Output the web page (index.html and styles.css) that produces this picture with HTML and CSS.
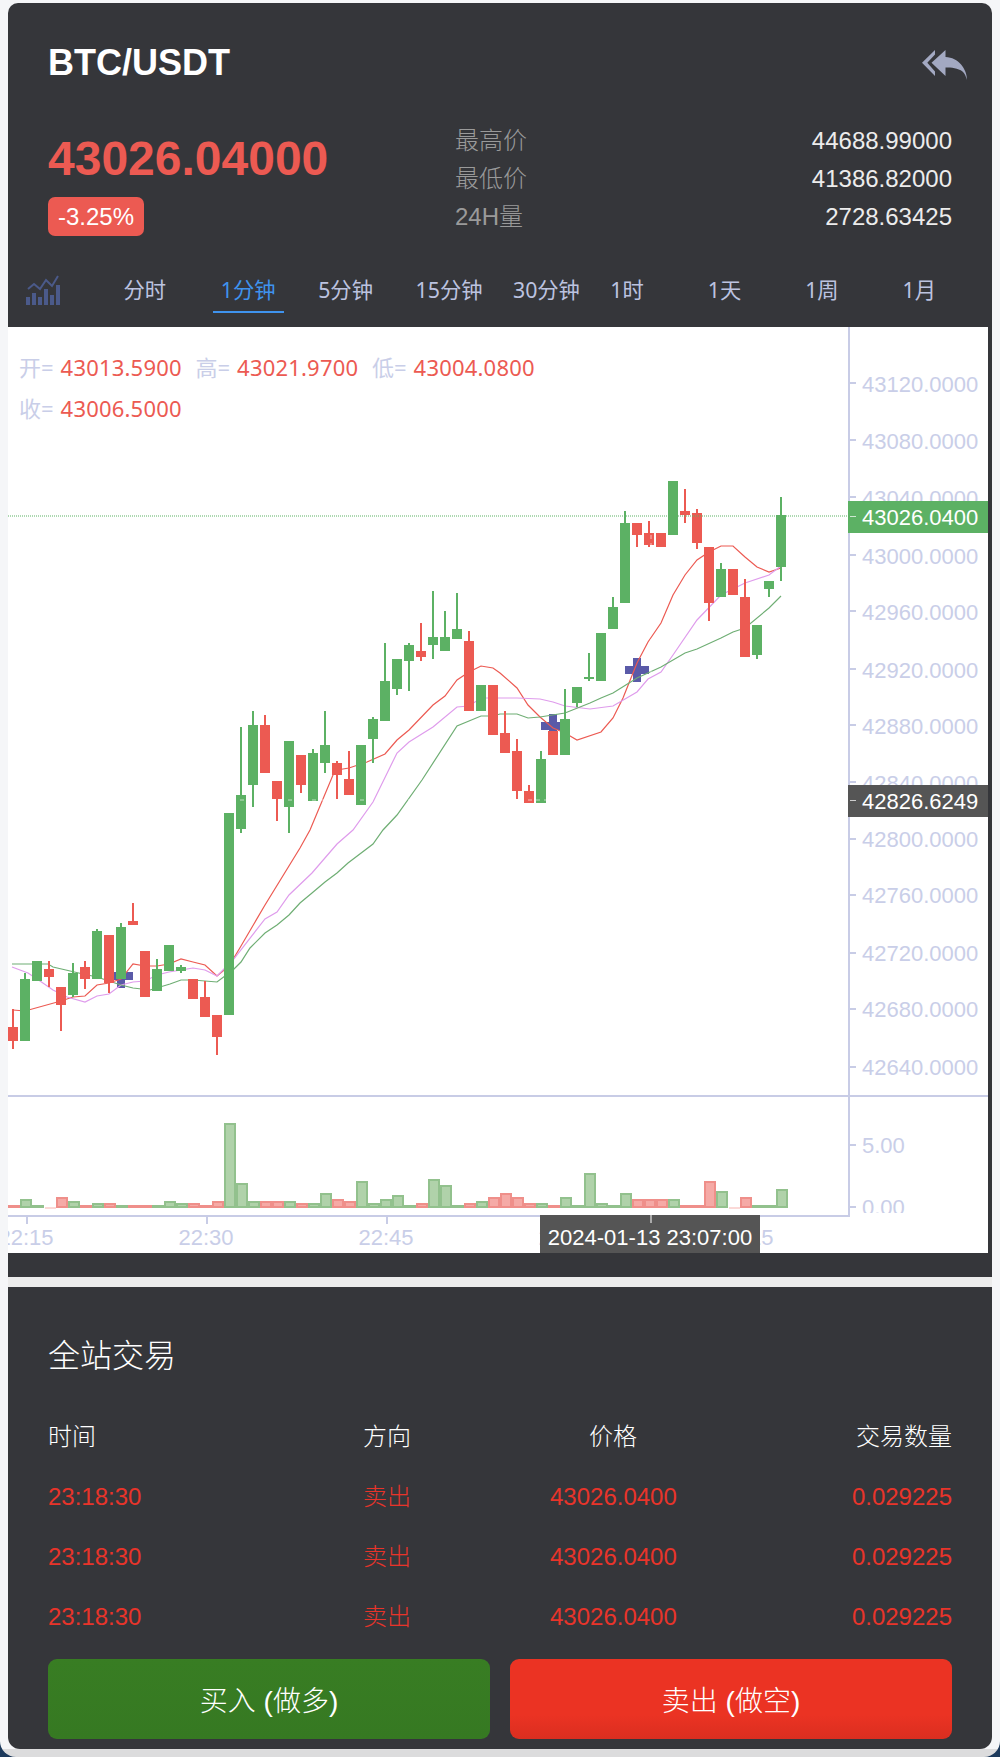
FILE: index.html
```html
<!DOCTYPE html>
<html lang="zh">
<head>
<meta charset="utf-8">
<title>BTC/USDT</title>
<link rel="stylesheet" href="styles.css">
</head>
<body>
<div class="page">
  <section class="card market">
    <header class="title-row">
      <h1 class="pair">BTC/USDT</h1>
      <svg class="back" viewBox="0 0 45 30" aria-hidden="true">
        <path d="M13 0 0 12.7 13 26v-4.400L5.300 12.700 13 4.500z"/>
        <path d="M23.500 0 9.500 12.700 23.500 26v-8.500c6 0 12.500.5 17 4 2 1.800 3.500 5 4.500 8.500 0-11-8.500-22.500-21.500-23z"/>
      </svg>
    </header>
    <div class="summary">
      <div class="quote">
        <div class="price">43026.04000</div>
        <div class="change">-3.25%</div>
      </div>
      <dl class="stats">
        <div class="stat"><dt>最高价</dt><dd>44688.99000</dd></div>
        <div class="stat"><dt>最低价</dt><dd>41386.82000</dd></div>
        <div class="stat"><dt>24H量</dt><dd>2728.63425</dd></div>
      </dl>
    </div>
    <nav class="tabs">
      <span class="tab-icon">
        <svg width="34" height="30" viewBox="26 275 34 30" aria-hidden="true">
          <path class="icon-bars" d="M26 297h4v8h-4zM32 293h4v12h-4zM38 297h4v8h-4zM44 289h4v16h-4zM50 295h4v10h-4zM56 285h4v20h-4z"/>
          <polyline class="icon-line" points="28,289 34,284 40,289 46,280 52,286 58,276"/>
        </svg>
      </span>
      <span class="tab"><span class="tab-text">分时</span></span>
      <span class="tab"><span class="tab-text active">1分钟</span></span>
      <span class="tab"><span class="tab-text">5分钟</span></span>
      <span class="tab"><span class="tab-text">15分钟</span></span>
      <span class="tab"><span class="tab-text">30分钟</span></span>
      <span class="tab"><span class="tab-text">1时</span></span>
      <span class="tab"><span class="tab-text">1天</span></span>
      <span class="tab"><span class="tab-text">1周</span></span>
      <span class="tab"><span class="tab-text">1月</span></span>
    </nav>
    <div class="chart">
      <div class="legend">
        <span class="legend-item"><b>开=</b><i>43013.5900</i></span>
        <span class="legend-item"><b>高=</b><i>43021.9700</i></span>
        <span class="legend-item"><b>低=</b><i>43004.0800</i></span>
        <span class="legend-item"><b>收=</b><i>43006.5000</i></span>
      </div>
      <svg class="plot" width="980" height="926" viewBox="8 327 980 926">
        <defs>
          <clipPath id="vol-clip"><rect x="850" y="1097" width="138" height="116"/></clipPath>
        </defs>
        <path class="cross" d="M541 722h8v-8h8v8h8v8h-8v8h-8v-8h-8zM109 972h8v-8h8v8h8v8h-8v8h-8v-8h-8zM625 666h8v-8h8v8h8v8h-8v8h-8v-8h-8z"/>
        <polyline class="ma ma-red" points="13,1010 25,1011 61,1001 73,997 85,996 97,985 109,983 121,979 133,964 145,966 157,966 169,964 181,959 193,962 205,965 217,976 229,966 241,946 265,905 300,848 310,830 333,775 337,770 349,768 367,762 385,754 397,740 409,730 433,705 445,696 457,680 469,672 481,666 493,668 500,673 517,688 528,705 540,717 553,728 565,733 577,740 601,732 613,718 623,698 637,663 648,642 661,623 673,595 685,575 697,560 709,552 721,546 733,546 745,557 757,567 769,572 781,568"/>
        <polyline class="ma ma-pink" points="12,967 28,973 40,981 53,990 67,997 85,1002 97,996 109,994 121,985 133,982 145,981 157,975 169,972 181,970 193,968 205,970 217,976 233,960 265,919 277,912 289,895 312,873 337,844 353,830 373,802 397,753 409,742 433,727 457,707 469,706 481,698 500,698 517,698 540,699 553,702 565,706 590,709 613,706 637,692 648,679 661,672 673,655 697,620 721,595 745,583 769,575 781,566"/>
        <polyline class="ma ma-green" points="12,964 48,964 53,967 83,974 97,977 121,985 133,988 150,990 170,984 181,980 193,980 217,982 233,970 241,962 250,948 265,933 277,925 289,915 300,903 312,893 325,882 337,873 348,863 373,844 383,830 397,815 422,780 457,726 469,721 481,716 493,716 500,714 517,714 528,718 540,717 565,713 590,703 601,698 613,693 637,678 661,667 685,653 697,649 721,638 733,632 745,628 769,608 781,596"/>
        <path class="candle-up" d="M20 979h10v62h-10zM24 973h2v6h-2zM32 961h10v20h-10zM68 973h10v22h-10zM72 963h2v34h-2zM92 931h10v48h-10zM96 929h2v2h-2zM116 927h10v52h-10zM120 923h2v4h-2zM152 969h10v22h-10zM156 959h2v10h-2zM164 945h10v26h-10zM176 967h10v4h-10zM180 965h2v8h-2zM224 813h10v202h-10zM236 795h10v34h-10zM240 727h2v106h-2zM248 725h10v60h-10zM252 711h2v96h-2zM284 741h10v66h-10zM288 741h2v92h-2zM308 753h10v48h-10zM312 749h2v4h-2zM320 745h10v18h-10zM324 711h2v62h-2zM356 745h10v60h-10zM368 719h10v20h-10zM372 717h2v46h-2zM380 681h10v40h-10zM384 643h2v38h-2zM392 659h10v30h-10zM396 659h2v36h-2zM404 645h10v16h-10zM408 643h2v48h-2zM428 637h10v8h-10zM432 591h2v68h-2zM440 637h10v14h-10zM444 611h2v26h-2zM452 629h10v10h-10zM456 593h2v36h-2zM476 685h10v26h-10zM536 759h10v44h-10zM540 751h2v8h-2zM560 719h10v36h-10zM564 689h2v30h-2zM572 687h10v16h-10zM576 703h2v4h-2zM584 677h10v2h-10zM588 653h2v28h-2zM596 633h10v48h-10zM608 607h10v22h-10zM612 597h2v10h-2zM620 523h10v80h-10zM624 511h2v12h-2zM668 481h10v54h-10zM716 569h10v28h-10zM720 563h2v6h-2zM752 625h10v30h-10zM756 655h2v4h-2zM764 581h10v8h-10zM768 589h2v8h-2zM776 515h10v52h-10zM780 497h2v84h-2z"/>
        <path class="candle-down" d="M8 1027h10v14h-10zM12 1009h2v40h-2zM44 969h10v8h-10zM48 961h2v26h-2zM56 987h10v18h-10zM60 1005h2v26h-2zM80 967h10v12h-10zM84 961h2v28h-2zM104 935h10v48h-10zM108 983h2v10h-2zM128 921h10v4h-10zM132 903h2v18h-2zM140 951h10v46h-10zM188 979h10v20h-10zM200 997h10v20h-10zM204 981h2v16h-2zM212 1015h10v22h-10zM216 1037h2v18h-2zM260 725h10v48h-10zM264 715h2v10h-2zM272 781h10v18h-10zM276 799h2v22h-2zM296 755h10v30h-10zM300 785h2v8h-2zM332 763h10v12h-10zM336 761h2v38h-2zM344 779h10v16h-10zM348 751h2v28h-2zM416 651h10v6h-10zM420 623h2v38h-2zM464 641h10v70h-10zM468 631h2v10h-2zM488 685h10v50h-10zM500 733h10v20h-10zM504 711h2v22h-2zM512 751h10v40h-10zM516 739h2v60h-2zM524 791h10v12h-10zM528 785h2v6h-2zM548 731h10v24h-10zM632 523h10v12h-10zM636 535h2v12h-2zM644 533h10v12h-10zM648 521h2v26h-2zM656 533h10v14h-10zM680 511h10v4h-10zM684 489h2v34h-2zM692 513h10v30h-10zM696 509h2v40h-2zM704 547h10v56h-10zM708 603h2v18h-2zM728 569h10v26h-10zM740 597h10v60h-10zM744 579h2v18h-2z"/>
        <line class="last-price" x1="8" y1="516" x2="848" y2="516"/>
        <path class="hair" d="M8 800H848M651 327V1215"/>
        <path class="vol-up" d="M21 1200h10v7h-10zM33 1206h10v1h-10zM69 1202h10v5h-10zM93 1204h10v3h-10zM117 1206h10v1h-10zM153 1206h10v1h-10zM165 1202h10v5h-10zM177 1204h10v3h-10zM225 1124h10v83h-10zM237 1184h10v23h-10zM249 1202h10v5h-10zM285 1202h10v5h-10zM309 1204h10v3h-10zM321 1194h10v13h-10zM357 1182h10v25h-10zM369 1204h10v3h-10zM381 1200h10v7h-10zM393 1196h10v11h-10zM405 1206h10v1h-10zM429 1180h10v27h-10zM441 1186h10v21h-10zM453 1206h10v1h-10zM477 1202h10v5h-10zM537 1204h10v3h-10zM561 1198h10v9h-10zM573 1206h10v1h-10zM585 1174h10v33h-10zM597 1204h10v3h-10zM609 1206h10v1h-10zM621 1194h10v13h-10zM669 1200h10v7h-10zM717 1192h10v15h-10zM753 1206h10v1h-10zM765 1206h10v1h-10zM777 1190h10v17h-10z"/>
        <path class="vol-down" d="M9 1206h10v1h-10zM57 1198h10v9h-10zM81 1206h10v1h-10zM105 1204h10v3h-10zM129 1206h10v1h-10zM141 1206h10v1h-10zM189 1204h10v3h-10zM201 1206h10v1h-10zM213 1202h10v5h-10zM261 1202h10v5h-10zM273 1202h10v5h-10zM297 1204h10v3h-10zM333 1200h10v7h-10zM345 1202h10v5h-10zM417 1204h10v3h-10zM465 1204h10v3h-10zM489 1198h10v9h-10zM501 1194h10v13h-10zM513 1198h10v9h-10zM525 1204h10v3h-10zM549 1206h10v1h-10zM633 1200h10v7h-10zM645 1200h10v7h-10zM657 1200h10v7h-10zM681 1206h10v1h-10zM693 1206h10v1h-10zM705 1182h10v25h-10zM741 1198h10v9h-10z"/>
        <path class="vol-tiny" d="M45 1207h11v2h-11zM729 1207h11v2h-11z"/>
        <path class="axis-fill" d="M848 327h2V1217H8v-2H848zM8 1095H988v2H8zM850 382h6v2h-6zM850 439h6v2h-6zM850 496h6v2h-6zM850 554h6v2h-6zM850 610h6v2h-6zM850 668h6v2h-6zM850 724h6v2h-6zM850 781h6v2h-6zM850 838h6v2h-6zM850 894h6v2h-6zM850 952h6v2h-6zM850 1008h6v2h-6zM850 1066h6v2h-6zM850 1144h6v2h-6zM850 1206h6v2h-6zM26 1217h2v7h-2zM206 1217h2v7h-2zM386 1217h2v7h-2z"/>
        <g class="axis-text">
          <text x="862" y="392">43120.0000</text>
          <text x="862" y="449">43080.0000</text>
          <text x="862" y="506">43040.0000</text>
          <text x="862" y="564">43000.0000</text>
          <text x="862" y="620">42960.0000</text>
          <text x="862" y="678">42920.0000</text>
          <text x="862" y="734">42880.0000</text>
          <text x="862" y="791">42840.0000</text>
          <text x="862" y="847">42800.0000</text>
          <text x="862" y="903">42760.0000</text>
          <text x="862" y="961">42720.0000</text>
          <text x="862" y="1017">42680.0000</text>
          <text x="862" y="1075">42640.0000</text>
          <g clip-path="url(#vol-clip)">
            <text x="862" y="1153">5.00</text>
            <text x="862" y="1215">0.00</text>
          </g>
          <g class="x-labels">
            <text x="26" y="1245">22:15</text>
            <text x="206" y="1245">22:30</text>
            <text x="386" y="1245">22:45</text>
            <text x="566" y="1245">23:00</text>
            <text x="746" y="1245">23:15</text>
          </g>
        </g>
        <rect class="tag-up" x="848" y="501" width="140" height="32"/>
        <text class="tag-text" x="862" y="525">43026.0400</text>
        <rect class="tag-dark" x="848" y="785" width="140" height="32"/>
        <text class="tag-text" x="862" y="809">42826.6249</text>
        <path class="tag-tick" d="M850 516h6v1h-6zM850 800h6v1h-6z"/>
        <rect class="tag-dark" x="540" y="1215" width="220" height="38"/>
        <rect class="tip-tick" x="650" y="1215" width="2" height="8"/>
        <text class="tag-text tip-text" x="650" y="1245">2024-01-13 23:07:00</text>
      </svg>
    </div>
  </section>
  <div class="gap"></div>
  <section class="card trades">
    <h2 class="trades-title">全站交易</h2>
    <div class="row head"><span>时间</span><span>方向</span><span class="center">价格</span><span class="right">交易数量</span></div>
    <div class="row sell"><span>23:18:30</span><span>卖出</span><span class="center">43026.0400</span><span class="right">0.029225</span></div>
    <div class="row sell"><span>23:18:30</span><span>卖出</span><span class="center">43026.0400</span><span class="right">0.029225</span></div>
    <div class="row sell"><span>23:18:30</span><span>卖出</span><span class="center">43026.0400</span><span class="right">0.029225</span></div>
    <div class="actions">
      <button class="btn buy">买入 (做多)</button>
      <button class="btn short">卖出 (做空)</button>
    </div>
  </section>
</div>
</body>
</html>
```
FILE: styles.css
```css
* { box-sizing: border-box; }
html, body { margin: 0; padding: 0; background: #1d3a5c; }
body {
  font-family: "Liberation Sans", "Noto Sans CJK SC", sans-serif;
  font-weight: 300;
  color: #fff;
}
.page {
  width: 1000px;
  height: 1757px;
  padding: 3px 8px 0;
  border-radius: 0 0 16px 16px;
  overflow: hidden;
  background: linear-gradient(to bottom, #f5f6f8 1749px, #dcdcdd 1749px);
}
.card { background: #35363a; }
.market { height: 1274px; border-radius: 10px 10px 0 0; }
.gap { height: 10px; background: #ececec; }
.trades { height: 462px; padding: 46px 40px 0; border-radius: 0 0 12px 12px; }

.title-row {
  display: flex;
  justify-content: space-between;
  align-items: center;
  padding: 34px 25px 0 40px;
}
.pair { margin: 0; font-size: 36px; font-weight: 700; line-height: 52px; }
.back { width: 45px; height: 30px; fill: #a3a9c2; margin-top: 3px; }

.summary {
  display: flex;
  margin: 33px 40px 0;
  height: 114px;
}
.quote { width: 407px; }
.price { font-size: 48px; font-weight: 700; line-height: 74px; color: #ec5a52; }
.change {
  display: inline-block;
  width: 96px;
  height: 39px;
  margin-top: 1px;
  border-radius: 7px;
  background: #ec5a52;
  font-size: 24px;
  font-weight: 400;
  line-height: 39px;
  text-align: center;
}
.stats { flex: 1; margin: 0; }
.stat { display: flex; justify-content: space-between; height: 38px; line-height: 38px; font-size: 24px; }
.stat dt { color: #9a9a9a; }
.stat dd { margin: 0; color: #ececec; }

.tabs {
  display: grid;
  grid-template-columns: repeat(10, 97.4px);
  height: 46px;
  margin-top: 31px;
  margin-bottom: 14px;
  padding-left: 10px;
  font-family: "Noto Sans", "Noto Sans CJK SC", sans-serif;
  font-size: 21.3px;
  font-weight: 400;
}
.tab-icon { padding-left: 8px; padding-top: 8px; }
.icon-bars { fill: #4b5a8a; }
.icon-line { fill: none; stroke: #4b5a8a; stroke-width: 2; }
.tab { display: block; }
.tab-text {
  display: inline-block;
  height: 46px;
  padding: 0 8px;
  line-height: 46px;
  color: #bcc3e0;
}
.tab-text.active { color: #3f93ee; border-bottom: 2px solid #3f93ee; }

.chart { position: relative; width: 980px; height: 926px; background: #fff; }
.plot { display: block; }
.legend {
  position: absolute;
  top: 20px;
  left: 11px;
  width: 540px;
  display: flex;
  flex-wrap: wrap;
  font-family: "Noto Sans", "Noto Sans CJK SC", sans-serif;
  font-size: 22px;
  font-weight: 400;
  line-height: 41px;
}
.legend-item { width: 176.5px; white-space: nowrap; }
.legend-item b { font-weight: 400; color: #c9cee8; margin-right: 7px; }
.legend-item i { font-style: normal; color: #ec5a52; letter-spacing: .2px; }

.cross { fill: #5a5aa8; }
.ma { fill: none; stroke-width: 1.2; }
.ma-red { stroke: #ec5a52; }
.ma-pink { stroke: #df9cec; }
.ma-green { stroke: #6fae74; }
.candle-up { fill: #5cb164; }
.candle-down { fill: #ec5a52; }
.last-price { stroke: #5cb164; stroke-opacity: .5; stroke-dasharray: 1 1; stroke-width: 2; }
.hair { fill: none; stroke: #fff; stroke-opacity: .6; stroke-dasharray: 4 4; stroke-width: 1; }
.vol-up { fill: #b0d2aa; stroke: #92c18d; stroke-width: 2; }
.vol-down { fill: #f5aaa6; stroke: #ef8f8a; stroke-width: 2; }
.vol-tiny { fill: #fbd9d7; }
.axis-fill { fill: #c8cce6; }
.axis-text text { font-family: "Liberation Sans", sans-serif; font-size: 22px; font-weight: 400; fill: #c9cee8; }
.x-labels text { text-anchor: middle; }
.tag-up { fill: #5cb164; }
.tag-dark { fill: #555; }
.tag-text { font-family: "Liberation Sans", sans-serif; font-size: 22px; font-weight: 400; fill: #fff; }
.tag-tick { fill: #fff; fill-opacity: .7; }
.tip-tick { fill: #aaa; }
.tip-text { text-anchor: middle; }

.trades-title { margin: 0 0 28px; font-size: 32px; font-weight: 300; line-height: 46px; }
.row {
  display: grid;
  grid-template-columns: 315px 187px 126px 1fr;
  height: 60px;
  line-height: 60px;
  font-size: 24px;
}
.row.sell { color: #e8342a; }
.center { text-align: center; }
.right { text-align: right; }
.actions { display: flex; gap: 20px; margin-top: 12px; }
.btn {
  flex: 1;
  height: 80px;
  border: 0;
  border-radius: 9px;
  font-family: inherit;
  font-size: 28px;
  font-weight: 300;
  color: #fff;
}
.buy { background: linear-gradient(#387d23, #367922); }
.short { background: linear-gradient(#eb3323 70%, #da2e20); }
```
